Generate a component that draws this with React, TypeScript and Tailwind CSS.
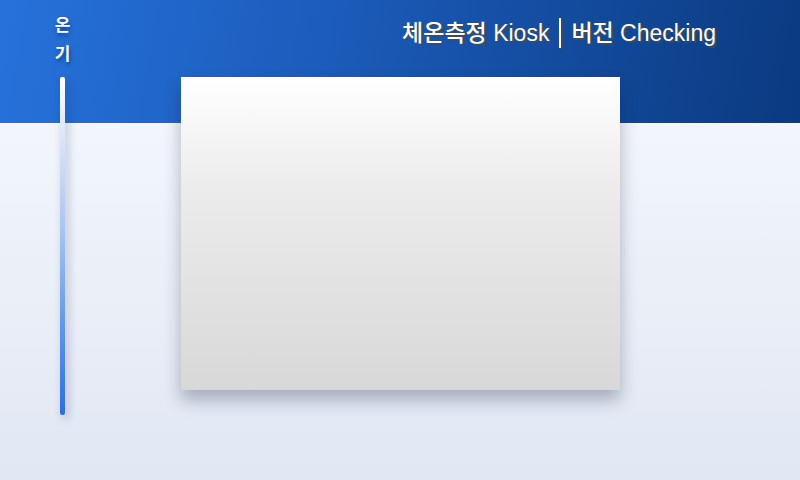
const font = {
  fontFamily: '"Liberation Sans", "Noto Sans CJK KR", sans-serif',
};

export default function App() {
  return (
    <div
      className="relative w-[800px] h-[480px] overflow-hidden bg-[linear-gradient(180deg,#f8fbff_0%,#e1e7f3_100%)]"
      style={font}
    >
      {/* blue header band behind the content */}
      <div className="absolute inset-x-0 top-0 h-[123px] bg-[linear-gradient(100deg,#2672db_0%,#1c5cbb_40%,#0a3a80_100%)]" />

      <div className="relative flex h-full">
        {/* left rail */}
        <div className="w-[125px] flex flex-col items-center pt-[11px]">
          <div className="flex flex-col items-center text-white font-bold text-[17px] leading-[29px] [text-shadow:1px_3px_4px_rgba(0,0,0,0.4)]">
            <span>온</span>
            <span>기</span>
          </div>
          <div className="mt-[8px] w-[5px] h-[338px] rounded-[2px] bg-[linear-gradient(180deg,#ffffff_0%,#dfe9fa_15%,#a9c5f0_45%,#5e95e6_75%,#2c70dc_100%)] shadow-[3px_4px_8px_rgba(30,50,100,0.3)]" />
        </div>

        {/* main area */}
        <div className="flex-1 flex flex-col">
          <div className="h-[77px] flex justify-end pr-[84px] pt-[17px]">
            <div className="flex items-center h-[32px] whitespace-pre text-white text-[23px] font-medium [text-shadow:2px_2px_1px_#4a4a4a]">
              <span>체온측정 Kiosk</span>
              <span className="mx-[10px] w-[2px] h-[30px] bg-white shadow-[2px_2px_1px_rgba(74,74,74,0.8)]" />
              <span>버전 Checking</span>
            </div>
          </div>
          <div className="ml-[56px] w-[439px] h-[313px] bg-[linear-gradient(180deg,#ffffff_0%,#ececec_35%,#d8d8d8_100%)] shadow-[0_10px_16px_rgba(20,30,60,0.3)]" />
        </div>
      </div>
    </div>
  );
}
